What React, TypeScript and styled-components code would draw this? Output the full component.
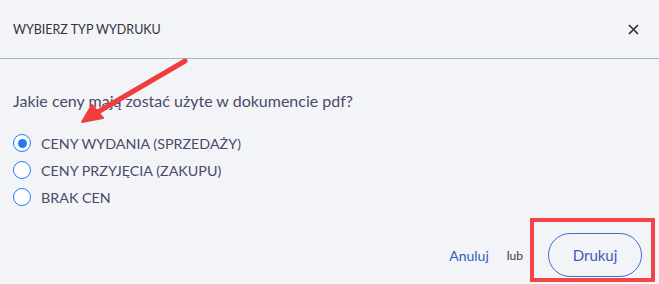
import React, { useState } from "react";
import styled, { createGlobalStyle } from "styled-components";

const GlobalStyle = createGlobalStyle`
  html, body {
    margin: 0;
    padding: 0;
    background: #f3f4f8;
  }
  body {
    font-family: Lato, "Noto Sans", sans-serif;
  }
`;

const options = [
  { id: "sale", label: "CENY WYDANIA (SPRZEDAŻY)" },
  { id: "purchase", label: "CENY PRZYJĘCIA (ZAKUPU)" },
  { id: "none", label: "BRAK CEN" },
];

export default function App() {
  const [price, setPrice] = useState("sale");

  return (
    <Dialog>
      <GlobalStyle />
      <Header>
        <Title>WYBIERZ TYP WYDRUKU</Title>
        <CloseButton aria-label="Zamknij">
          <svg width="11" height="11" viewBox="0 0 11 11">
            <path d="M1 1L10 10M10 1L1 10" stroke="#2b2b35" strokeWidth="1.6" />
          </svg>
        </CloseButton>
      </Header>
      <Body>
        <Question>Jakie ceny mają zostać użyte w dokumencie pdf?</Question>
        <OptionList>
          {options.map((o) => (
            <OptionRow key={o.id}>
              <RadioInput
                type="radio"
                name="price"
                checked={price === o.id}
                onChange={() => setPrice(o.id)}
              />
              <OptionLabel>{o.label}</OptionLabel>
            </OptionRow>
          ))}
        </OptionList>
      </Body>
      <Footer>
        <CancelLink href="#">Anuluj</CancelLink>
        <Or>lub</Or>
        <PrintButton>Drukuj</PrintButton>
      </Footer>

      <Arrow width="200" height="80" viewBox="0 0 200 80">
        <path d="M185 3L96 55" stroke="#f03e3e" strokeWidth="5" strokeLinecap="round" />
        <path d="M82 64L92 47L103 60Z" fill="#f03e3e" stroke="#f03e3e" strokeWidth="2" strokeLinejoin="round" />
      </Arrow>
      <HighlightBox />
    </Dialog>
  );
}

const Dialog = styled.div`
  position: relative;
  width: 659px;
  height: 284px;
  background: #f3f4f8;
  display: flex;
  flex-direction: column;
  overflow: hidden;
`;

const Header = styled.div`
  height: 58px;
  display: flex;
  align-items: center;
  justify-content: space-between;
  padding: 0 20px 0 13px;
  border-bottom: 1px solid #a8b3c4;
`;

const Title = styled.div`
  font-size: 12.5px;
  color: #33333d;
`;

const CloseButton = styled.button`
  border: 0;
  background: none;
  padding: 0;
  display: flex;
  cursor: pointer;
`;

const Body = styled.div`
  padding: 31px 13px 0;
  flex: 1;
`;

const Question = styled.div`
  font-size: 16px;
  color: #4b4a68;
  line-height: 22px;
`;

const OptionList = styled.div`
  margin-top: 20px;
  display: flex;
  flex-direction: column;
  gap: 5px;
`;

const OptionRow = styled.label`
  display: flex;
  align-items: center;
  gap: 10px;
  height: 22px;
  cursor: pointer;
`;

const RadioInput = styled.input`
  appearance: none;
  margin: 0;
  width: 18px;
  height: 18px;
  border: 1.5px solid #1f7cf2;
  border-radius: 50%;
  background: #fff;
  display: grid;
  place-content: center;

  &:checked::before {
    content: "";
    width: 9px;
    height: 9px;
    border-radius: 50%;
    background: #1f7cf2;
  }
`;

const OptionLabel = styled.span`
  font-size: 14.3px;
  color: #4b4a68;
`;

const Footer = styled.div`
  display: flex;
  align-items: center;
  justify-content: flex-end;
  padding: 0 17px 7px 0;
`;

const CancelLink = styled.a`
  font-size: 14px;
  color: #2f5cc2;
  text-decoration: none;
`;

const Or = styled.span`
  font-size: 12px;
  color: #3a3a44;
  margin: 0 25px 0 18px;
`;

const PrintButton = styled.button`
  width: 94px;
  height: 44px;
  border: 1px solid #3d6fd1;
  border-radius: 22px;
  background: transparent;
  font-family: inherit;
  font-size: 15px;
  color: #3c5cb4;
  cursor: pointer;
`;

const Arrow = styled.svg`
  position: absolute;
  left: 0;
  top: 58px;
  pointer-events: none;
`;

const HighlightBox = styled.div`
  position: absolute;
  left: 530px;
  top: 218px;
  width: 117px;
  height: 56px;
  border: 4px solid #f24545;
  pointer-events: none;
`;
